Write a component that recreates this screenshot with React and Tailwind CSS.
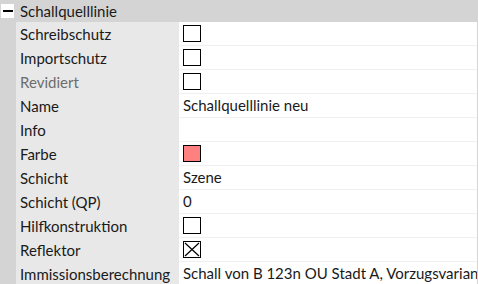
import React from "react";

const rows = [
  { label: "Schreibschutz", type: "check" },
  { label: "Importschutz", type: "check" },
  { label: "Revidiert", type: "check", muted: true },
  { label: "Name", type: "text", value: "Schallquelllinie neu" },
  { label: "Info", type: "text", value: "" },
  { label: "Farbe", type: "color" },
  { label: "Schicht", type: "text", value: "Szene" },
  { label: "Schicht (QP)", type: "text", value: "0" },
  { label: "Hilfkonstruktion", type: "check" },
  { label: "Reflektor", type: "checked" },
  { label: "Immissionsberechnung", type: "text", value: "Schall von B 123n OU Stadt A, Vorzugsvariante" },
];

function Value({ row }) {
  if (row.type === "check") {
    return <div className="w-[18px] h-[17px] border border-black bg-white"></div>;
  }
  if (row.type === "checked") {
    return (
      <svg width="18" height="17" viewBox="0 0 18 17">
        <rect x="0.5" y="0.5" width="17" height="16" fill="white" stroke="black" />
        <path d="M2 2 L16 15 M16 2 L2 15" stroke="black" strokeWidth="1.2" />
      </svg>
    );
  }
  if (row.type === "color") {
    return <div className="w-[18px] h-[17px] border border-black bg-[#ff8080]"></div>;
  }
  return <span className="whitespace-nowrap">{row.value}</span>;
}

export default function App() {
  return (
    <div
      className="w-[478px] h-[284px] overflow-hidden bg-[#d4d4d4] text-[15px] text-[#1a1a1a]"
      style={{ fontFamily: 'Lato, "Noto Sans", sans-serif' }}
    >
      {/* Header */}
      <div className="h-[22px] flex items-center">
        <div className="ml-[1px] w-[13px] h-[14px] bg-white flex items-center justify-center">
          <div className="w-[10px] h-[2px] bg-black"></div>
        </div>
        <span className="ml-[6px] leading-none">Schallquelllinie</span>
      </div>

      {/* Rows */}
      <div className="flex flex-col pl-[16px] pr-[1px]">
        {rows.map((row) => (
          <div key={row.label} className="flex h-[24px]">
            <div
              className={
                "w-[163px] shrink-0 bg-[#e8e8e8] flex items-center pl-[4px] whitespace-nowrap " +
                (row.muted ? "text-[#6d6d6d]" : "")
              }
            >
              {row.label}
            </div>
            <div className="flex-1 min-w-0 overflow-hidden bg-white border-b border-[#f0f0f0] flex items-center pl-[4px]">
              <Value row={row} />
            </div>
          </div>
        ))}
      </div>
    </div>
  );
}
